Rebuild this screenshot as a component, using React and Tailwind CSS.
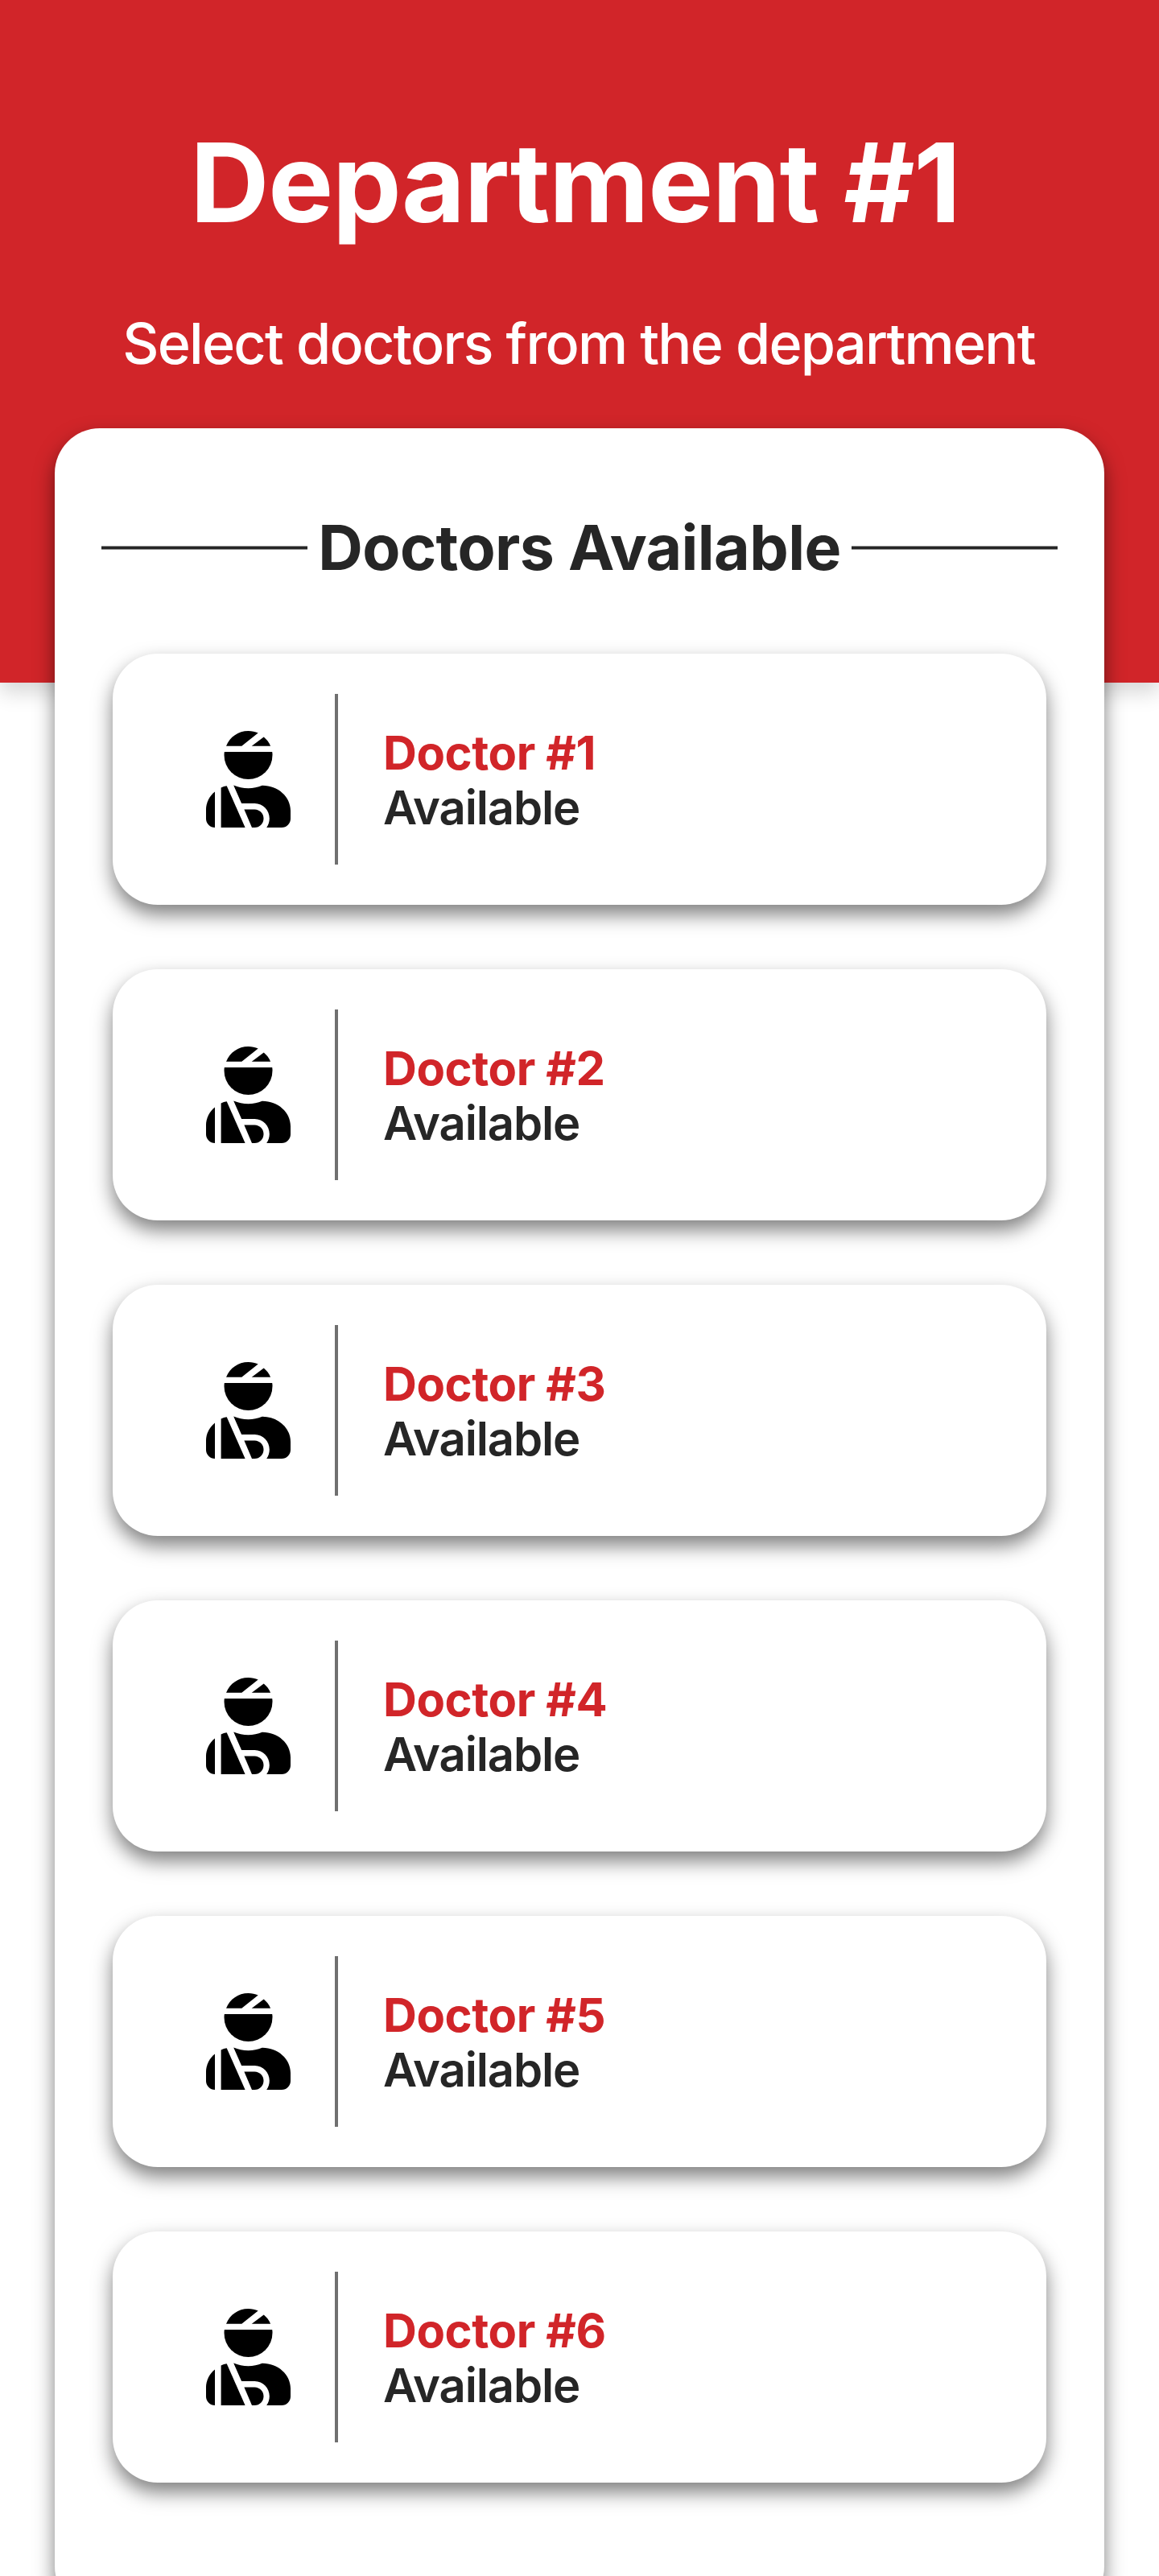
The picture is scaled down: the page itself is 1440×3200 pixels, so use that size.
const doctors = [1, 2, 3, 4, 5, 6];

function PatientIcon() {
  return (
    <svg className="h-[120px] w-[105px] shrink-0" viewBox="0 0 105 120" fill="#000">
      <path d="M25 18.7C29.5 7.5 40 0 52.5 0c4.400 0 8.500.9 12.200 2.500L44.300 18.700Z" />
      <path d="M71.700 7.400c3.700 3 6.600 6.900 8.400 11.300H56.700Z" />
      <path d="M22.800 26h59.400c.3 1.300.3 2.700.3 4a30 30 0 0 1-60 0c0-1.300.1-2.700.3-4Z" />
      <path d="M11 75.500V120A11 11 0 0 1 0 109V97.500C0 89 4.300 80.800 11 75.500Z" />
      <path d="M18.600 70.500c2.200-1.100 4.600-1.800 7.100-2.200L48.600 120h-30Z" />
      <path d="M34.200 67.500c5.700 2.400 11.900 3.700 18.300 3.700 6.100 0 11.800-1.200 17.200-3.500C89 67.500 105 81.500 105 99v10a11 11 0 0 1-11 11H75.200c2.300-3.200 3.600-7.200 3.600-11.300 0-10.300-8.100-18.700-18.300-18.700H44.100Z" />
      <path d="M47.400 97.500H60.300c6.300 0 11.200 5 11.200 11.200S66.600 120 60.300 120H57Z" />
    </svg>
  );
}

function DoctorCard({ number }) {
  return (
    <div className="flex h-[312px] items-center rounded-[56px] bg-white pl-[116px] shadow-[0_12px_24px_rgba(0,0,0,0.5)]">
      <PatientIcon />
      <div className="ml-[55px] h-[212px] w-1 bg-[#707070]" />
      <div className="ml-14 pt-0.5 text-[58px] leading-[68px]">
        <p className="font-bold tracking-[-0.43px] text-[#d12529]">Doctor #{number}</p>
        <p className="font-semibold tracking-[-1.15px] text-[#262626]">Available</p>
      </div>
    </div>
  );
}

function Line() {
  return <div className="h-[5px] w-64 shrink-0 border-y border-[#929292] bg-[#262626]" />;
}

export default function App() {
  return (
    <div className="h-[3200px] w-[1440px] overflow-hidden bg-white font-['Inter',sans-serif]">
      <header className="flex h-[848px] flex-col items-center bg-[#d12529] pt-[144px] text-white shadow-[0_12px_24px_rgba(0,0,0,0.16)]">
        <h1 className="pr-[11px] text-[136px] leading-[165px] font-bold tracking-[-1.17px] whitespace-nowrap">
          Department #1
        </h1>
        <p className="mt-[75px] pr-0.5 text-[70px] leading-[85px] font-medium tracking-[-1.76px] whitespace-nowrap">
          Select doctors from the department
        </p>
      </header>
      <main className="relative mx-[68px] -mt-[316px] h-[2712px] rounded-[56px] bg-white shadow-[0_12px_24px_rgba(0,0,0,0.5)]">
        <div className="flex h-[280px] items-center justify-between px-[58px] pt-[17px]">
          <Line />
          <h2 className="pb-px text-[77px] leading-[94px] font-bold tracking-[-0.6px] whitespace-nowrap text-[#262626]">
            Doctors Available
          </h2>
          <Line />
        </div>
        <div className="flex flex-col gap-20 px-[72px]">
          {doctors.map((number) => (
            <DoctorCard key={number} number={number} />
          ))}
        </div>
      </main>
    </div>
  );
}
